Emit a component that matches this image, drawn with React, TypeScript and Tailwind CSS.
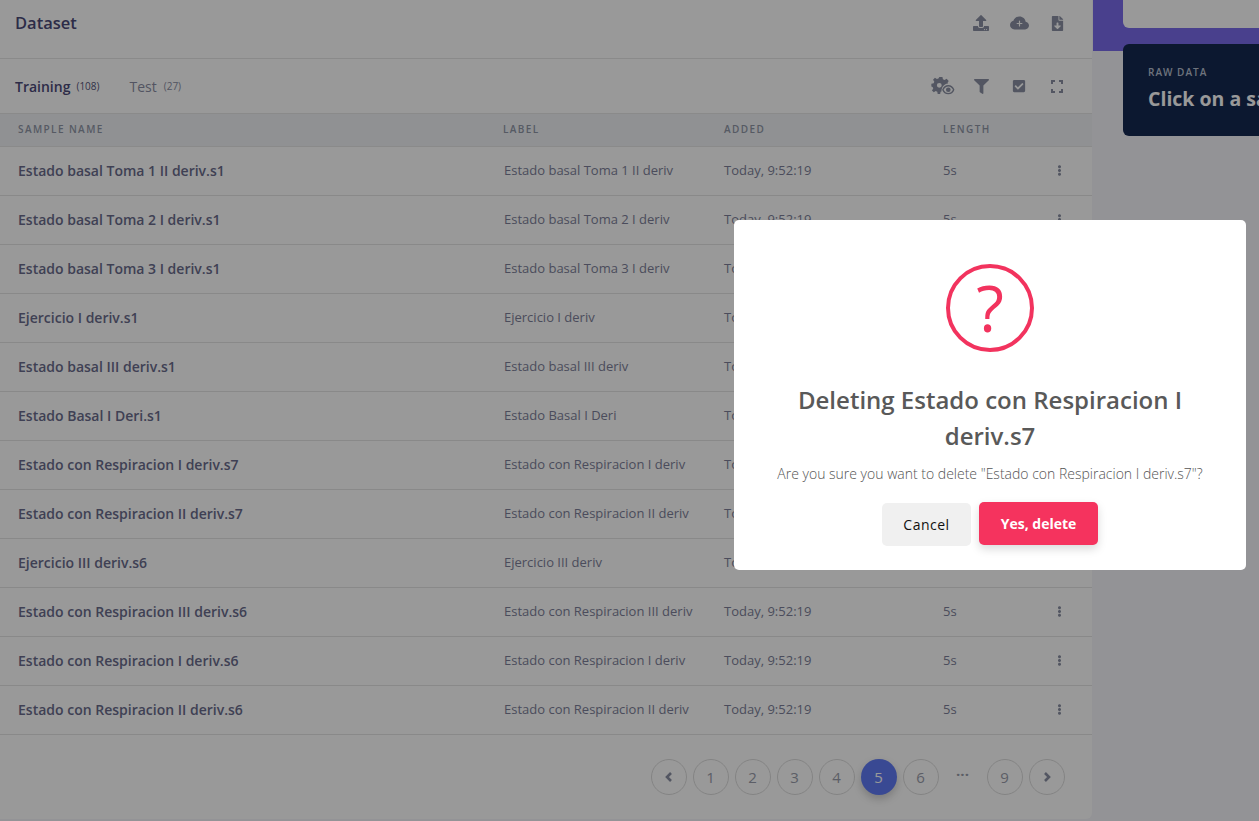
import React from "react";
import { FaUpload, FaFileDownload, FaFilter, FaCheckSquare, FaEllipsisV } from "react-icons/fa";
import { BsCloudPlusFill } from "react-icons/bs";

const rows: [string, string][] = [
  ["Estado basal Toma 1 II deriv.s1", "Estado basal Toma 1 II deriv"],
  ["Estado basal Toma 2 I deriv.s1", "Estado basal Toma 2 I deriv"],
  ["Estado basal Toma 3 I deriv.s1", "Estado basal Toma 3 I deriv"],
  ["Ejercicio I deriv.s1", "Ejercicio I deriv"],
  ["Estado basal III deriv.s1", "Estado basal III deriv"],
  ["Estado Basal I Deri.s1", "Estado Basal I Deri"],
  ["Estado con Respiracion I deriv.s7", "Estado con Respiracion I deriv"],
  ["Estado con Respiracion II deriv.s7", "Estado con Respiracion II deriv"],
  ["Ejercicio III deriv.s6", "Ejercicio III deriv"],
  ["Estado con Respiracion III deriv.s6", "Estado con Respiracion III deriv"],
  ["Estado con Respiracion I deriv.s6", "Estado con Respiracion I deriv"],
  ["Estado con Respiracion II deriv.s6", "Estado con Respiracion II deriv"],
];

const cols = "grid grid-cols-[504px_220px_220px_1fr_48px] pl-[18px] items-center";

function CogEye() {
  return (
    <svg width="24" height="18" viewBox="0 0 22 17" fill="currentColor">
      <path d="M7.500 0h3l.4 2.200 1.600.7L14.400 1.700l2 2-1 1.600.3.900c-2 .2-3.800 1.400-5 3-.5.700-1.300 2.600-1.100 4.400l-.9.300-.4 2.100H6l-.4-2.100-1.500-.7-1.800 1.200-1.700-1.700 1.200-1.800-.6-1.500L0 9V6.300l2.200-.4.600-1.500L1.600 2.600l1.800-1.800L5.200 2l1.500-.6zM7.500 5.600a2.300 2.300 0 1 0 0 4.600 2.300 2.300 0 0 0 0-4.600z" />
      <path fillRule="evenodd" d="M16 7.600c2.700 0 4.800 1.700 5.800 4.400-1 2.700-3.100 4.400-5.800 4.400s-4.800-1.700-5.800-4.400c1-2.700 3.100-4.400 5.800-4.400zm0 1.300c-2 0-3.600 1.200-4.400 3.100.8 1.900 2.400 3.100 4.400 3.100s3.600-1.200 4.400-3.100c-.8-1.900-2.400-3.100-4.400-3.100zm0 .9a2.200 2.200 0 1 1 0 4.400 2.200 2.200 0 0 1 0-4.400z" />
    </svg>
  );
}

function Expand() {
  return (
    <svg width="12" height="13" viewBox="0 0 12 13" fill="none" stroke="currentColor" strokeWidth="2">
      <path d="M1 4V1h3M8 1h3v3M11 9v3H8M4 12H1V9" />
    </svg>
  );
}

function Chevron({ right }: { right?: boolean }) {
  return (
    <svg width="8" height="10" viewBox="0 0 8 10" fill="none" stroke="currentColor" strokeWidth="2.600" className="text-[#8a90a3]">
      <path d={right ? "M2 1l4 4-4 4" : "M6 1L2 5l4 4"} />
    </svg>
  );
}

function IconBox({ children }: { children: React.ReactNode }) {
  return <div className="w-[24px] flex justify-center">{children}</div>;
}

function PageBtn({ children, active }: { children: React.ReactNode; active?: boolean }) {
  return (
    <div
      className={
        active
          ? "w-9 h-9 rounded-full flex items-center justify-center pr-[1px] text-[15px] text-white bg-[#5f7bf5] shadow-[0_4px_8px_rgba(0,0,0,0.2)]"
          : "w-9 h-9 rounded-full flex items-center justify-center pr-[1px] text-[15px] text-[#9a9dab] border border-[#dcdcdc]"
      }
    >
      {children}
    </div>
  );
}

export default function App() {
  return (
    <div className="relative w-[1259px] h-[821px] overflow-hidden bg-[#f5f5fb] flex font-['Open_Sans',sans-serif]">
      <div className="w-[1092px] h-[819px] shrink-0 bg-white rounded-br-md flex flex-col">
        <div className="h-[59px] shrink-0 border-b border-[#e6e6e6] flex items-center justify-between pl-[15px] pr-[23px] pb-[12px]">
          <div className="text-[16.500px] font-semibold text-[#4c4a78]">Dataset</div>
          <div className="flex items-center gap-[14px] text-[#8a90a3]">
            <IconBox><FaUpload size={16} /></IconBox>
            <IconBox><BsCloudPlusFill size={19} /></IconBox>
            <IconBox><FaFileDownload size={15} /></IconBox>
          </div>
        </div>
        <div className="h-[55px] shrink-0 border-b border-[#e6e6e6] flex items-center justify-between pl-[15px] pr-[23px]">
          <div className="flex items-center">
            <span className="text-[14px] font-semibold text-[#4c4a78]">Training</span>
            <span className="text-[10px] text-[#55557a] ml-[6px]">(108)</span>
            <span className="text-[14px] text-[#8a8da3] ml-[30px]">Test</span>
            <span className="text-[10px] text-[#8a8da3] ml-[7px]">(27)</span>
          </div>
          <div className="flex items-center gap-[14px] text-[#8a90a3]">
            <IconBox><CogEye /></IconBox>
            <IconBox><FaFilter size={15} /></IconBox>
            <IconBox><FaCheckSquare size={14} /></IconBox>
            <IconBox><Expand /></IconBox>
          </div>
        </div>
        <div className={cols + " h-[33px] shrink-0 pb-[1px] bg-[#f0f2f6] border-b border-[#e6e6e6] text-[10px] font-semibold tracking-[1.400px] text-[#8f96a6]"}>
          <div>SAMPLE NAME</div>
          <div className="-ml-[19px]">LABEL</div>
          <div className="-ml-[18px]">ADDED</div>
          <div className="-ml-[19px]">LENGTH</div>
          <div />
        </div>
        {rows.map(([name, label]) => (
          <div key={name} className={cols + " h-[49px] shrink-0 border-b border-[#e4e4e4]"}>
            <div className="text-[14px] font-semibold text-[#6a6c8c] whitespace-nowrap pb-[2px]">{name}</div>
            <div className="-ml-[18px] text-[13px] text-[#7d7f99] whitespace-nowrap">{label}</div>
            <div className="-ml-[18px] text-[13px] text-[#7d7f99] whitespace-nowrap">Today, 9:52:19</div>
            <div className="-ml-[19px] text-[13px] text-[#7d7f99]">5s</div>
            <div className="text-[#8a90a3] ml-[10px] pb-[2px]"><FaEllipsisV size={11} /></div>
          </div>
        ))}
        <div className="flex-1 flex items-center justify-end pr-[27px] gap-[6px]">
          <PageBtn><Chevron /></PageBtn>
          <PageBtn>1</PageBtn>
          <PageBtn>2</PageBtn>
          <PageBtn>3</PageBtn>
          <PageBtn>4</PageBtn>
          <PageBtn active>5</PageBtn>
          <PageBtn>6</PageBtn>
          <div className="w-9 text-center text-[15px] font-bold leading-none -mt-[5px] pr-[1px] text-[#9a9dab]">···</div>
          <PageBtn>9</PageBtn>
          <PageBtn><Chevron right /></PageBtn>
        </div>
      </div>

      <div className="flex-1 min-w-0">
        <div className="h-[51px] ml-[1px] bg-[#7a6bec]" />
        <div className="-mt-[51px] ml-[31px] h-[28px] bg-white rounded-bl-md" />
        <div className="mt-[16px] ml-[31px] h-[92px] bg-[#142850] rounded-l-md pl-[25px] pt-[21px] whitespace-nowrap overflow-hidden">
          <div className="text-[10px] font-semibold tracking-[1px] text-[#b8c0d0]">RAW DATA</div>
          <div className="text-[19.500px] font-bold text-white leading-[27px] mt-[5px]">Click on a sample</div>
        </div>
      </div>

      <div className="absolute inset-0 bg-black/40" />

      <div className="absolute left-[734px] top-[220px] w-[512px] h-[350px] bg-white rounded-[5px] flex flex-col items-center">
        <div className="mt-[44px] w-[88px] h-[88px] rounded-full border-[4px] border-[#f2335e] flex items-center justify-center text-[#f2335e] text-[64px] font-normal leading-none">?</div>
        <div className="mt-[30px] text-[24px] leading-[36px] font-semibold text-[#595959] text-center w-[440px]">Deleting Estado con Respiracion I deriv.s7</div>
        <div className="mt-[9px] text-[14px] leading-[21px] font-light text-[#545454] whitespace-nowrap">Are you sure you want to delete "Estado con Respiracion I deriv.s7"?</div>
        <div className="mt-[18px] flex items-start gap-[8px]">
          <div className="mt-[1px] w-[89px] h-[43px] rounded-[5px] bg-[#f0f0f0] flex items-center justify-center text-[14px] font-medium tracking-[0.500px] text-[#111]">Cancel</div>
          <div className="w-[119px] h-[43px] rounded-[5px] bg-[#f5335e] flex items-center justify-center text-[14px] font-bold text-white shadow-[0_4px_10px_rgba(0,0,0,0.15)]">Yes, delete</div>
        </div>
      </div>
    </div>
  );
}
